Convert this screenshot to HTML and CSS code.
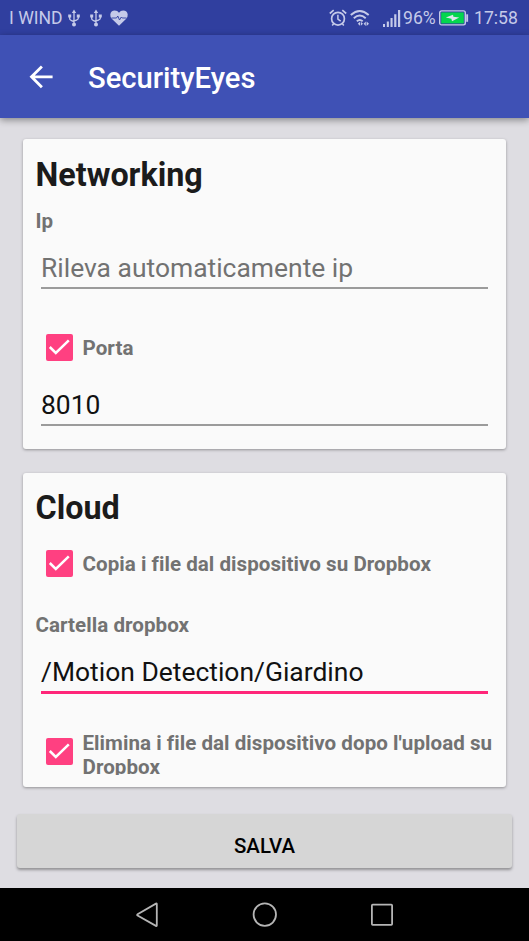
FILE: index.html
```html
<!DOCTYPE html>
<html lang="it">
<head>
<meta charset="utf-8">
<title>SecurityEyes</title>
<link rel="stylesheet" href="styles.css">
</head>
<body>
<div class="screen">
  <div class="status">
    <span class="carrier">I WIND</span>
    <svg class="usb" width="12" height="18" viewBox="0 0 12 18"><path d="M6 2v13M1.700 7v2.600q0 1.900 4.300 2.900M10.300 7v2q0 1.900-4.300 2.900" fill="none" stroke="currentColor" stroke-width="1.300"/><path d="M6 .5 8.200 4H3.800zM.2 5.500h3v3h-3zM8.800 5.500h3v3h-3z" fill="currentColor"/><circle cx="6" cy="15.500" r="2" fill="currentColor"/></svg>
    <svg class="usb usb-second" width="12" height="18" viewBox="0 0 12 18"><path d="M6 2v13M1.700 7v2.600q0 1.900 4.300 2.900M10.300 7v2q0 1.900-4.300 2.900" fill="none" stroke="currentColor" stroke-width="1.300"/><path d="M6 .5 8.200 4H3.800zM.2 5.500h3v3h-3zM8.800 5.500h3v3h-3z" fill="currentColor"/><circle cx="6" cy="15.500" r="2" fill="currentColor"/></svg>
    <svg class="heart" width="18" height="16" viewBox="0 0 18 16"><path d="M9 15.700 2 9Q0 6.900.3 4.500.8.500 4.800.4 7.500.4 9 2.700 10.500.4 13.200.4q4 .1 4.500 4.100Q18 6.900 16 9z" fill="currentColor"/><path d="M1.500 8h5l1.300-2 1.700 4L11.300 7l.9 1h4.300" fill="none" stroke="#303f9f" stroke-width=".9"/></svg>
    <span class="spacer"></span>
    <svg class="alarm" width="18" height="18" viewBox="0 0 18 18" fill="none" stroke="currentColor"><circle cx="9" cy="9.700" r="6.400" stroke-width="1.700"/><path d="M8.900 5.800v4.400l2.800 2" stroke-width="1.500"/><path d="M.8 4.500 4.700 1.200M17.200 4.500l-3.900-3.300" stroke-width="1.700"/><path d="m4.800 14.500-1.600 2M13.200 14.500l1.600 2" stroke-width="1.500"/></svg>
    <svg class="wifi" width="20" height="18" viewBox="0 0 20 18" fill="none" stroke="currentColor" stroke-width="1.900"><path d="M.8 6Q9.700-2 18.700 6M3.800 9.200q5.900-5.200 11.900 0M6.800 12.300q3-2.500 5.900 0"/><path d="M7.800 14.800 10 12.800v4zM10.800 12.800l2.200 2-2.200 2zM13.600 14.800l2.200-2.200v4.400zM16.600 12.600l2.400 2.200-2.400 2.200z" fill="currentColor" stroke="none"/></svg>
    <svg class="signal" width="18" height="17" viewBox="0 0 18 17" fill="currentColor"><path d="M0 14h2v3H0zM3.800 11.500h2.100V17H3.800zM7.500 8h2.100v9H7.500zM11.200 4.200h2.200V17h-2.200zM15 0h2.200v17H15z"/></svg>
    <span class="percent">96%</span>
    <svg class="battery" width="30" height="16" viewBox="0 0 30 16"><rect x=".7" y=".9" width="25.600" height="14" rx="1.800" fill="none" stroke="currentColor" stroke-width="1.400"/><rect x="2.200" y="2.400" width="22.600" height="11" fill="#04d64e"/><path d="M27.200 4.300h1.900v7.500h-1.900z" fill="currentColor"/><path d="M6.800 7.400 14 4.700l.4 2 5.800.7-7.200 3.900-.6-2.500z" fill="#dce7ee"/></svg>
    <span class="clock">17:58</span>
  </div>
  <header class="appbar">
    <svg class="back" width="24" height="24" viewBox="0 0 24 24" fill="none" stroke="#fff" stroke-width="2.800"><path d="M23.600 11.800H2.800M12.900 1.400 2.500 11.800l10.400 10.400"/></svg>
    <h1 class="title">SecurityEyes</h1>
  </header>
  <main class="content">
    <section class="card networking">
      <h2 class="heading heading-net">Networking</h2>
      <div class="label">Ip</div>
      <div class="field field-ip hint">Rileva automaticamente ip</div>
      <div class="check check-port">
        <span class="box"><svg width="27" height="27" viewBox="0 0 27 27"><path d="m3.800 13 6 6L22.800 6.300" fill="none" stroke="#fff" stroke-width="2.500"/></svg></span>
        <span class="check-text">Porta</span>
      </div>
      <div class="field field-port">8010</div>
    </section>
    <section class="card cloud">
      <h2 class="heading">Cloud</h2>
      <div class="check check-copy">
        <span class="box"><svg width="27" height="27" viewBox="0 0 27 27"><path d="m3.800 13 6 6L22.800 6.300" fill="none" stroke="#fff" stroke-width="2.500"/></svg></span>
        <span class="check-text">Copia i file dal dispositivo su Dropbox</span>
      </div>
      <div class="label label-folder">Cartella dropbox</div>
      <div class="field field-folder active">/Motion Detection/Giardino</div>
      <div class="check check-delete">
        <span class="box"><svg width="27" height="27" viewBox="0 0 27 27"><path d="m3.800 13 6 6L22.800 6.300" fill="none" stroke="#fff" stroke-width="2.500"/></svg></span>
        <span class="check-text">Elimina i file dal dispositivo dopo l'upload su<br>Dropbox</span>
      </div>
    </section>
    <button class="save" type="button">SALVA</button>
  </main>
  <nav class="navbar">
    <svg width="26" height="26" viewBox="0 0 26 26"><path d="M22.800 2.200v21.200q0 .9-.9.500L3.600 13.600q-.9-.7 0-1.400L21.900 1.600q.9-.3.900.6z"/></svg>
    <svg width="26" height="26" viewBox="0 0 26 26"><circle cx="12.800" cy="12.600" r="11.200"/></svg>
    <svg width="26" height="26" viewBox="0 0 26 26"><rect x="2.900" y="2.600" width="20.200" height="20.200" rx=".8"/></svg>
  </nav>
</div>
</body>
</html>
```
FILE: styles.css
```css
* { box-sizing: border-box; }
body { margin: 0; font-family: Roboto, sans-serif; }
.screen {
  width: 529px;
  height: 941px;
  overflow: hidden;
  display: flex;
  flex-direction: column;
  background: #dedde2;
}
svg { display: block; flex: none; }

.status {
  height: 35px;
  flex: none;
  display: flex;
  align-items: center;
  padding: 1px 12px 0 9px;
  background: #303f9f;
  color: #c5cae9;
  font-size: 17.600px;
  line-height: 34px;
  white-space: nowrap;
}
.carrier { width: 59px; }
.usb-second { margin-left: 10px; }
.heart { margin-left: 8px; }
.spacer { flex: 1; }
.wifi { margin-left: 3px; }
.signal { margin-left: 13px; }
.percent { width: 36px; margin-left: 2px; }
.clock { width: 43px; margin-left: 5px; }

.appbar {
  height: 83px;
  flex: none;
  display: flex;
  align-items: center;
  padding: 0 0 0 29px;
  background: #3f51b5;
  box-shadow: 0 2px 7px rgba(0, 0, 0, .4);
  z-index: 1;
}
.title {
  margin: 2px 0 0 35px;
  color: #fff;
  font-size: 29.200px;
  font-weight: 500;
  line-height: 40px;
}

.content {
  flex: 1;
  display: flex;
  flex-direction: column;
  padding: 21px 17px 0;
}
.card {
  flex: none;
  margin: 0 6px 24px;
  padding: 15px 18px 0 12.500px;
  border-radius: 3px;
  background: #fafafa;
  box-shadow: 0 1px 3px rgba(0, 0, 0, .35);
}
.networking { height: 310px; padding-top: 16px; }
.cloud { height: 314px; margin-bottom: 27px; padding-right: 0; }
.heading {
  margin: 0;
  font-size: 32.300px;
  font-weight: 700;
  line-height: 40px;
  color: #1b1b1b;
}
.heading-net { margin-bottom: -1px; }
.label {
  margin-top: 15px;
  color: #727272;
  font-size: 20.570px;
  font-weight: 700;
  letter-spacing: .04px;
  line-height: 24px;
}
.field {
  width: 447px;
  margin-left: 5.500px;
  border-bottom: 2px solid #9b9b9b;
  color: #111;
  font-size: 26.450px;
  line-height: 32px;
  white-space: nowrap;
}
.hint { color: #727272; }
.field-ip { height: 37px; margin-top: 19px; }
.field-port { height: 37px; margin-top: 28px; }
.field-folder { height: 38px; margin-top: 19px; }
.active { border-bottom: 3px solid #ff2679; }
.check {
  display: flex;
  align-items: center;
  color: #727272;
  font-size: 20.570px;
  font-weight: 700;
  letter-spacing: .04px;
  line-height: 24px;
  white-space: nowrap;
}
.box {
  width: 27px;
  height: 27px;
  flex: none;
  margin: 0 10px;
  border-radius: 2px;
  background: #ff4081;
}
.check-port { height: 27px; margin-top: 45px; }
.check-copy { height: 27px; margin-top: 22px; }
.label-folder { margin-top: 36px; }
.check-delete { height: 44px; margin-top: 37px; overflow: hidden; align-items: flex-start; }
.check-delete .box { margin-top: 7px; }

.save {
  height: 54px;
  flex: none;
  padding: 10px 0 0;
  border: 0;
  border-radius: 3px;
  background: #d6d6d6;
  color: #000;
  box-shadow: 0 2px 3px rgba(0, 0, 0, .35);
  font: 500 20.400px/24px Roboto, sans-serif;
}

.navbar {
  height: 53px;
  flex: none;
  display: flex;
  justify-content: center;
  align-items: center;
  gap: 91.500px;
  background: #000;
  fill: none;
  stroke: #b5b5b5;
  stroke-width: 1.800;
}
```
